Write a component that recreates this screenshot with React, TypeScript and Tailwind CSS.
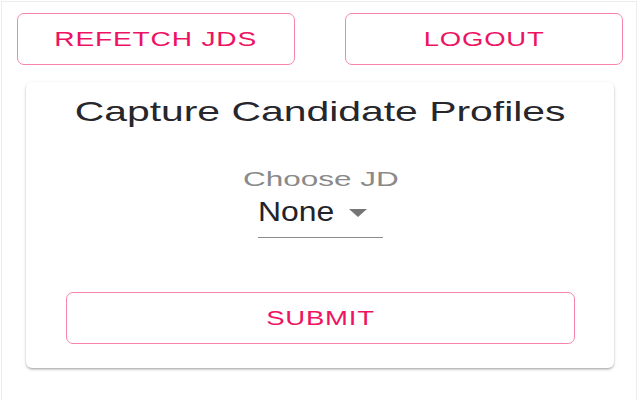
export default function App() {
  const btn =
    "flex items-center justify-center h-[52px] rounded-[7px] border-[1.5px] border-[#f784ae] bg-white text-[#ee1262] text-[21px] leading-[24px] tracking-[0.6px] uppercase"

  return (
    <div className="ml-px mt-px w-[636px] h-[399px] border-x border-t border-[#ececec] bg-white font-['Liberation_Sans',Arial,sans-serif]">
      <div className="flex gap-[50px] pt-[11px] pl-[15px] pr-[13px]">
        <button className={`${btn} flex-1`}>
          <span className="inline-block scale-x-[1.34]">Refetch JDs</span>
        </button>
        <button className={`${btn} flex-1`}>
          <span className="inline-block scale-x-[1.31]">Logout</span>
        </button>
      </div>

      <div className="mt-[17px] ml-[24px] mr-[22px] rounded-[6px] bg-white pt-[14px] pb-[24px] pl-[40px] pr-[39px] shadow-[0_2px_3px_-1px_rgba(0,0,0,0.25),0_1px_2px_0_rgba(0,0,0,0.12),0_1px_4px_0_rgba(0,0,0,0.08)]">
        <h1 className="text-center text-[28px] leading-[32px] text-[#26262c]">
          <span className="inline-block scale-x-[1.46]">Capture Candidate Profiles</span>
        </h1>

        <div className="mt-[39px] flex flex-col items-center">
          <label className="text-[21px] leading-[24px] text-[#8a8a8a]">
            <span className="inline-block scale-x-[1.5]">Choose JD</span>
          </label>
          <div className="mt-[5px] flex w-[125px] items-center border-b-[1.5px] border-[#8c8c8c] pb-[9px]">
            <span className="inline-block origin-left scale-x-[1.14] text-[28px] leading-[32px] text-[#222228]">
              None
            </span>
            <svg className="ml-auto mr-[16px] mt-[2px]" width="18" height="8" viewBox="0 0 18 8">
              <path d="M0 0 L18 0 L9 8 Z" fill="#757575" />
            </svg>
          </div>
        </div>

        <button className={`${btn} mt-[54px] w-full`}>
          <span className="inline-block scale-x-[1.31]">Submit</span>
        </button>
      </div>
    </div>
  )
}
